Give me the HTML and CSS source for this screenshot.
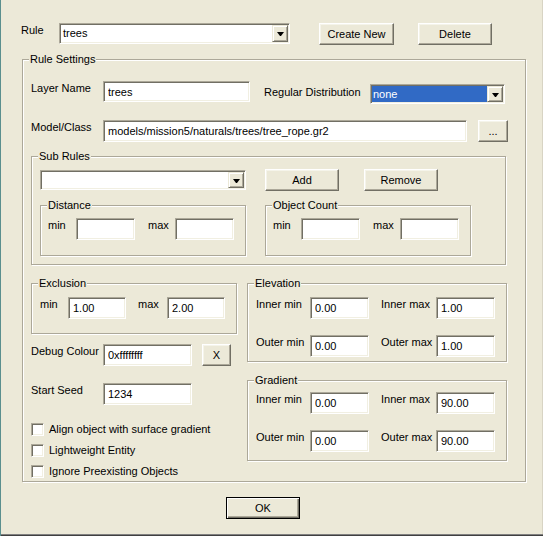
FILE: index.html
```html
<!DOCTYPE html>
<html>
<head>
<meta charset="utf-8">
<link rel="stylesheet" href="styles.css">
</head>
<body>
<div class="dialog">
  <div class="row top-row">
    <label class="lbl lbl-rule">Rule</label>
    <div class="combo combo-rule"><span class="combo-val">trees</span><span class="drop"><span class="tri"></span></span></div>
    <button class="btn btn-create">Create New</button>
    <button class="btn btn-delete">Delete</button>
  </div>

  <fieldset class="group g-settings">
    <legend>Rule Settings</legend>
    <div class="settings-body">
      <div class="row layer-row">
        <label class="lbl lbl-w72">Layer Name</label>
        <input class="edit edit-layer" type="text" value="trees">
        <label class="lbl lbl-dist">Regular Distribution</label>
        <div class="combo combo-dist"><span class="combo-val sel">none</span><span class="drop"><span class="tri"></span></span></div>
      </div>

      <div class="row model-row">
        <label class="lbl lbl-w72">Model/Class</label>
        <input class="edit edit-model" type="text" value="models/mission5/naturals/trees/tree_rope.gr2">
        <button class="btn btn-browse">...</button>
      </div>

      <fieldset class="group g-sub">
        <legend>Sub Rules</legend>
        <div class="sub-body">
          <div class="row sub-row">
            <div class="combo combo-sub"><span class="combo-val"></span><span class="drop"><span class="tri"></span></span></div>
            <button class="btn btn-add">Add</button>
            <button class="btn btn-remove">Remove</button>
          </div>
          <div class="row minmax-groups">
            <fieldset class="group g-small">
              <legend>Distance</legend>
              <div class="small-body">
                <div class="row">
                  <label class="lbl lbl-min">min</label>
                  <input class="edit edit-small" type="text" value="">
                  <label class="lbl lbl-max">max</label>
                  <input class="edit edit-small" type="text" value="">
                </div>
              </div>
            </fieldset>
            <fieldset class="group g-small g-count">
              <legend>Object Count</legend>
              <div class="small-body">
                <div class="row">
                  <label class="lbl lbl-min">min</label>
                  <input class="edit edit-small" type="text" value="">
                  <label class="lbl lbl-max">max</label>
                  <input class="edit edit-small" type="text" value="">
                </div>
              </div>
            </fieldset>
          </div>
        </div>
      </fieldset>

      <div class="columns">
        <div class="col-left">
          <fieldset class="group g-excl">
            <legend>Exclusion</legend>
            <div class="excl-body">
              <div class="row">
                <label class="lbl lbl-emin">min</label>
                <input class="edit edit-excl" type="text" value="1.00">
                <label class="lbl lbl-emax">max</label>
                <input class="edit edit-excl" type="text" value="2.00">
              </div>
            </div>
          </fieldset>

          <div class="row debug-row">
            <label class="lbl lbl-w72">Debug Colour</label>
            <input class="edit edit-short" type="text" value="0xffffffff">
            <button class="btn btn-x">X</button>
          </div>

          <div class="row seed-row">
            <label class="lbl lbl-w72">Start Seed</label>
            <input class="edit edit-short" type="text" value="1234">
          </div>

          <div class="checks">
            <label class="check"><input type="checkbox" class="cb"><span>Align object with surface gradient</span></label>
            <label class="check"><input type="checkbox" class="cb"><span>Lightweight Entity</span></label>
            <label class="check"><input type="checkbox" class="cb"><span>Ignore Preexisting Objects</span></label>
          </div>
        </div>

        <div class="col-right">
          <fieldset class="group g-range g-elev">
            <legend>Elevation</legend>
            <div class="range-body elev-body">
              <div class="row">
                <label class="lbl lbl-imin">Inner min</label>
                <input class="edit edit-range" type="text" value="0.00">
                <label class="lbl lbl-imax">Inner max</label>
                <input class="edit edit-range" type="text" value="1.00">
              </div>
              <div class="row outer-row">
                <label class="lbl lbl-imin">Outer min</label>
                <input class="edit edit-range" type="text" value="0.00">
                <label class="lbl lbl-imax">Outer max</label>
                <input class="edit edit-range" type="text" value="1.00">
              </div>
            </div>
          </fieldset>

          <fieldset class="group g-range g-grad">
            <legend>Gradient</legend>
            <div class="range-body grad-body">
              <div class="row">
                <label class="lbl lbl-imin">Inner min</label>
                <input class="edit edit-range" type="text" value="0.00">
                <label class="lbl lbl-imax">Inner max</label>
                <input class="edit edit-range" type="text" value="90.00">
              </div>
              <div class="row outer-row">
                <label class="lbl lbl-imin">Outer min</label>
                <input class="edit edit-range" type="text" value="0.00">
                <label class="lbl lbl-imax">Outer max</label>
                <input class="edit edit-range" type="text" value="90.00">
              </div>
            </div>
          </fieldset>
        </div>
      </div>
    </div>
  </fieldset>

  <div class="ok-row">
    <button class="btn btn-ok">OK</button>
  </div>
</div>
</body>
</html>
```

FILE: styles.css
```css
html, body {
  margin: 0;
  padding: 0;
  background: #ECE9D8;
}

body {
  font-family: "Liberation Sans", Arial, sans-serif;
  font-size: 11px;
  line-height: 13px;
  color: #000;
}

.dialog {
  width: 543px;
  height: 536px;
  box-sizing: border-box;
  padding: 23px 0 0 20px;
  border-left: 1px solid #5a8f8e;
  background: #ECE9D8;
  box-shadow: inset 0 -1px 0 #404040, inset 0 -2px 0 #808080, inset -1px 0 0 #d8d4c4;
}

.row {
  display: flex;
  align-items: flex-start;
}

.lbl {
  display: block;
  flex: none;
  white-space: nowrap;
  margin-top: 1px;
}

/* ---------- top row ---------- */
.top-row { height: 22px; }
.lbl-rule { width: 38px; }

/* ---------- combo boxes ---------- */
.combo {
  display: flex;
  flex: none;
  box-sizing: border-box;
  padding: 1px;
  background: #fff;
  border: 1px solid;
  border-color: #ACA899 #fff #fff #ACA899;
  box-shadow: inset 1px 1px 0 #716F64, inset -1px -1px 0 #F1EFE2;
}

.combo-val {
  flex: 1;
  display: flex;
  align-items: center;
  padding-left: 2px;
  white-space: nowrap;
}

.combo-val.sel {
  background: #316AC5;
  color: #fff;
  padding-left: 1px;
}

.drop {
  flex: none;
  width: 16px;
  box-sizing: border-box;
  display: flex;
  align-items: center;
  justify-content: center;
  background: #ECE9D8;
  border: 1px solid;
  border-color: #ECE9D8 #716F64 #716F64 #ECE9D8;
  box-shadow: inset 1px 1px 0 #fff, inset -1px -1px 0 #ACA899;
}

.tri {
  width: 1px;
  height: 0;
  border-top: 4px solid #000;
  border-left: 3px solid transparent;
  border-right: 3px solid transparent;
  margin-top: 1px;
}

.combo-rule { width: 231px; height: 21px; }
.combo-dist { width: 135px; height: 20px; margin-top: 3px; }
.combo-sub { width: 206px; height: 20px; margin-top: 1px; }

/* ---------- buttons ---------- */
.btn {
  flex: none;
  box-sizing: border-box;
  height: 22px;
  margin: 0;
  padding: 0;
  font: inherit;
  color: #000;
  background: #ECE9D8;
  border: 1px solid;
  border-color: #fff #716F64 #716F64 #fff;
  box-shadow: inset -1px -1px 0 #ACA899, inset 1px 1px 0 #F5F4EA;
  text-align: center;
  cursor: default;
}

.btn-create { width: 75px; margin-left: 29px; }
.btn-delete { width: 74px; margin-left: 24px; }
.btn-browse { width: 30px; margin-left: 11px; }
.btn-add { width: 74px; margin-left: 19px; }
.btn-remove { width: 74px; margin-left: 25px; }
.btn-x { width: 29px; margin-left: 10px; }

.btn-ok {
  width: 74px;
  border: 1px solid #000;
  box-shadow: inset 1px 1px 0 #fff, inset -1px -1px 0 #716F64, inset -2px -2px 0 #ACA899;
}

/* ---------- edits ---------- */
.edit {
  flex: none;
  box-sizing: border-box;
  height: 22px;
  margin: 0;
  padding: 0 0 0 4px;
  font: inherit;
  color: #000;
  background: #fff;
  border: 1px solid;
  border-color: #ACA899 #fff #fff #ACA899;
  box-shadow: inset 1px 1px 0 #716F64, inset -1px -1px 0 #F1EFE2;
  outline: none;
}

/* ---------- group boxes ---------- */
.group {
  box-sizing: border-box;
  margin: 0;
  padding: 0;
  min-inline-size: 0;
  border: 1px solid #ACA899;
  box-shadow: inset 1px 1px 0 #fff, 1px 1px 0 #fff;
}

.group > legend {
  margin-left: 6px;
  padding: 0 1px;
  line-height: 13px;
  background: #ECE9D8;
}

/* Rule Settings */
.g-settings {
  width: 504px;
  margin: 8px 0 0 1px;
}

.settings-body {
  padding: 15px 0 3px 8px;
}

.lbl-w72 { width: 72px; }

.layer-row { height: 23px; }
.edit-layer { width: 147px; height: 21px; }
.lbl-dist { width: 106px; margin-left: 14px; margin-top: 5px; }

.model-row { margin-top: 16px; }
.edit-model { width: 364px; }

/* Sub Rules */
.g-sub {
  width: 475px;
  margin-top: 8px;
}

.sub-body {
  padding: 6px 0 8px 8px;
}

.minmax-groups {
  margin-top: 8px;
}

.g-small { width: 206px; }
.g-count { margin-left: 19px; }

.small-body {
  padding: 6px 0 15px 7px;
}

.lbl-min { width: 28px; }
.lbl-max { width: 27px; margin-left: 13px; }
.edit-small { width: 59px; }

/* two columns */
.columns {
  display: flex;
  align-items: flex-start;
  margin-top: 12px;
}

.col-left { width: 206px; flex: none; }
.col-right { width: 260px; flex: none; margin-left: 10px; }

/* Exclusion */
.g-excl { width: 206px; }
.excl-body { padding: 7px 0 14px 8px; }
.lbl-emin { width: 28px; }
.lbl-emax { width: 29px; margin-left: 12px; }
.edit-excl { width: 58px; }

.debug-row { margin-top: 10px; }
.seed-row { margin-top: 17px; }
.edit-short { width: 89px; }

/* checkboxes */
.checks {
  margin-top: 18px;
  display: flex;
  flex-direction: column;
  gap: 8px;
}

.check {
  display: flex;
  align-items: flex-start;
  height: 13px;
  white-space: nowrap;
}

.cb {
  appearance: none;
  -webkit-appearance: none;
  flex: none;
  width: 13px;
  height: 13px;
  margin: 0 5px 0 0;
  box-sizing: border-box;
  background: #fff;
  border: 1px solid;
  border-color: #ACA899 #fff #fff #ACA899;
  box-shadow: inset 1px 1px 0 #716F64, inset -1px -1px 0 #F1EFE2;
}

/* Elevation / Gradient */
.g-range { width: 260px; }
.g-grad { margin-top: 12px; }

.range-body { padding-left: 8px; }
.elev-body { padding-top: 7px; padding-bottom: 4px; }
.grad-body { padding-top: 5px; padding-bottom: 8px; }

.outer-row { margin-top: 16px; }
.lbl-imin { width: 54px; }
.lbl-imax { width: 55px; margin-left: 12px; }
.edit-range { width: 59px; }

/* OK */
.ok-row {
  display: flex;
  margin-top: 15px;
  padding-left: 205px;
}
```
